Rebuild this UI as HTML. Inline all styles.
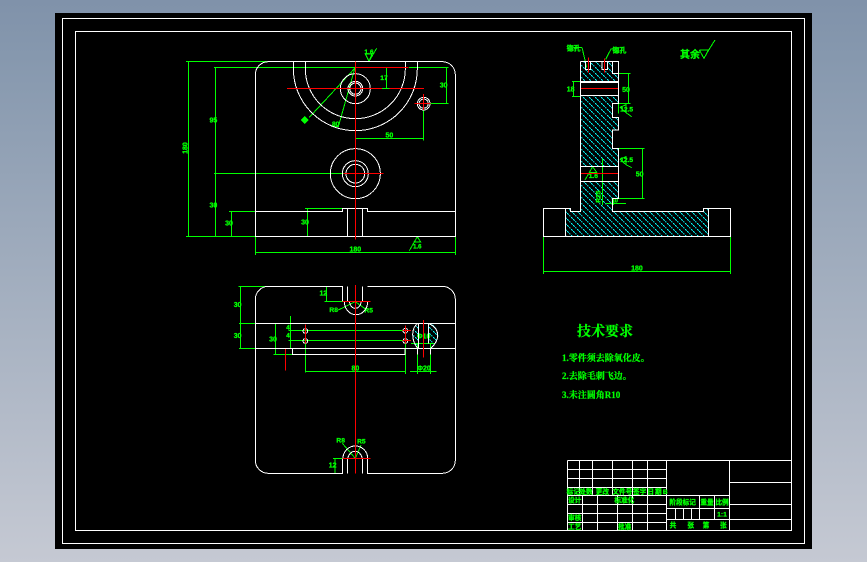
<!DOCTYPE html>
<html><head><meta charset="utf-8"><style>
html,body{margin:0;padding:0;width:867px;height:562px;overflow:hidden;background:linear-gradient(180deg,#8092aa 0,#8698ae 10%,#c5c9d3 100%)}
svg{position:absolute;left:0;top:0;shape-rendering:crispEdges}
.w{fill:none;stroke:#fff;stroke-width:1}
.w *,.g *,.r *{vector-effect:non-scaling-stroke}
.g{fill:none;stroke:#0f0;stroke-width:1}
.r{fill:none;stroke:#f00;stroke-width:1}
text{font-family:"Liberation Sans","Noto Sans CJK SC",sans-serif;font-weight:bold;fill:#0f0;stroke:#0f0;stroke-width:.9;text-anchor:middle}
.t{font-family:"Liberation Serif","Noto Serif CJK SC",serif;text-anchor:start;stroke-width:.25}
</style></head><body>
<svg width="867" height="562" viewBox="0 0 867 562" xmlns="http://www.w3.org/2000/svg">
<defs>
<pattern id="h" width="6" height="6" patternUnits="userSpaceOnUse"><path d="M-1 -1L7 7M-1 5L1 7M5 -1L7 1" stroke="#0ff" stroke-width="1" fill="none" stroke-dasharray="2 1" shape-rendering="crispEdges"/></pattern>
</defs>
<rect x="55" y="13" width="757" height="536" fill="#000"/>
<rect x="62.5" y="18.5" width="742" height="525" fill="none" stroke="#fff"/>
<rect x="75.5" y="31.5" width="716" height="499" fill="none" stroke="#fff"/>

<!-- Top view -->
<g transform="translate(170 30) scale(.33333)">
<g class="g">
<path d="M48 95H295M55 95V619M48 619H256M132 113H555M717 113H835M136 113V619M132 430H640M177 544H256M184 544V619M405 535H520M412 535V619M405 619H532M830 113V220M735 220H835M640 113H658M650 113V176M636 176H658M556 325H760M760 220V332M256 619V675M856 619V675M256 667H856M556 113L418 262M555 113L505 290M485 290H505"/>
<path d="M718 662L742 620L752 636H730M586 72H606L597 94L586 72M597 94L620 55"/>
</g>
<path d="M392 270L404 258L416 270L404 282Z" fill="#0f0"/>
<text x="597" y="72" font-size="20">1.6</text>
<text x="556" y="665" font-size="21">180</text>
<text x="742" y="656" font-size="18">1.6</text>
<text x="658" y="322" font-size="21">50</text>
<text x="821" y="173" font-size="21">30</text>
<text x="642" y="150" font-size="20">17</text>
<text x="497" y="288" font-size="20">80</text>
<text x="130" y="278" font-size="21">95</text>
<text x="130" y="532" font-size="21">30</text>
<text x="177" y="587" font-size="21">30</text>
<text x="405" y="584" font-size="21">30</text>
<text x="47" y="360" font-size="21" transform="rotate(-90 47 354)">180</text>
<g class="w">
<path d="M295 95H817A39 39 0 0 1 856 134V619H256V134A39 39 0 0 1 295 95"/>
<path d="M256 544H517V535H592V544H856M532 535V619M578 535V619"/>
<path d="M370 95V116A186 186 0 0 0 742 116V95M406 95V116A150 150 0 0 0 706 116V95"/>
<circle cx="556" cy="176" r="45"/><circle cx="556" cy="176" r="22"/><circle cx="556" cy="176" r="17"/>
<circle cx="761" cy="221" r="19"/><circle cx="761" cy="221" r="14"/>
<circle cx="556" cy="431" r="75"/><circle cx="556" cy="431" r="39"/><circle cx="556" cy="431" r="28"/>
</g>
<g class="r"><path d="M556 95V628M351 175H636M658 175H762M556 112H716M733 220H782M761 192V240M520 430H640"/></g>
</g>

<!-- Side view -->
<g fill="url(#h)">
<path d="M580.3 61.3H612.3V73.3H618.7V81.7H580.3Z"/>
<path d="M580.3 95.7H618.7V103.3H612.3V117.3H618.7V130H612.3V148.3H618.7V166.3H580.3Z"/>
<path d="M580.3 181.3H618.7V198.3H612.3V211.3H703.3V208.3H708.7V236.3H565.3V208.3H570.7V211.3H580.3Z"/>
</g>
<g transform="translate(530 30) scale(.33333)">
<rect x="167" y="94" width="15" height="24" fill="#000"/><rect x="216" y="94" width="16" height="24" fill="#000"/>
<g class="g">
<path d="M156 52L170 112M130 52H156M227 88L243 57H256M126 155H151M126 199H151M130 155V199M266 130H302M266 220H302M296 130V220M266 130V250M266 355H344M266 505H344M337 355V505M270 232L288 224V248L270 232M288 248L305 260M270 388L288 380V404L270 388M288 404L305 413M165 450L188 410L200 427H178M217 386V525M228 520H288M250 505V525M40 619V732M602 619V732M40 724H602M508 60H535L522 85L508 60M522 85L535 62L555 30"/>
</g>
<text x="131" y="62" font-size="21">锪孔</text>
<text x="268" y="68" font-size="21">锪孔</text>
<text x="122" y="185" font-size="21">18</text>
<text x="288" y="186" font-size="21">50</text>
<text x="290" y="244" font-size="20">12.5</text>
<text x="290" y="396" font-size="20">12.5</text>
<text x="329" y="440" font-size="21">50</text>
<text x="190" y="444" font-size="20">1.6</text>
<text x="204" y="507" font-size="20" transform="rotate(-90 204 500)">R25</text>
<text x="254" y="518" font-size="18">10</text>
<text x="321" y="722" font-size="21">180</text>
<text x="480" y="84" font-size="30">其余</text>
<g class="w">
<path d="M151 94H266V130H247V94M151 94V544H122V535H106V619M266 130V220H247V262H266V300H247V355H266V505H247V544H520V535H536V619H106M106 535H40V619H602V535H536"/>
<path d="M151 155H266M151 158H266M151 197H266M151 409H266M151 454H266M167 94V118H182V94M216 94V118H232V94"/>
</g>
<g class="r"><path d="M175 82V128M223 85V128M153 175H264M153 430H264"/></g>
</g>

<!-- Bottom view -->
<g fill="url(#h)">
<path d="M418 324C411 331 411 341 418 348Z"/>
<path d="M428.7 324H432C441 331 441 342 431 348H430Z"/>
</g>
<g transform="translate(225 280) scale(.33333)">
<g class="g">
<path d="M40 19H128M46 19V205M42 205H91M42 130H455M145 223H203M151 130V223M196 108V205M190 151H540M190 181H540M241 190V277M541 190V282M241 274H541M577 190V282M617 190V282M555 274H635M558 190H632M298 19H352M298 65H352M304 19V65M324 535H352M324 580H352M330 535V580M391 65L340 90M391 65L428 92M391 535L352 490M391 535L408 495"/>
</g>
<text x="38" y="81" font-size="21">30</text>
<text x="38" y="174" font-size="21">30</text>
<text x="144" y="185" font-size="21">30</text>
<text x="189" y="148" font-size="19">4</text>
<text x="189" y="172" font-size="19">4</text>
<text x="295" y="46" font-size="21">12</text>
<text x="326" y="96" font-size="20">R8</text>
<text x="431" y="97" font-size="20">R5</text>
<text x="391" y="271" font-size="21">80</text>
<text x="597" y="272" font-size="21">Φ20</text>
<text x="596" y="176" font-size="21">Φ10</text>
<text x="347" y="488" font-size="20">R8</text>
<text x="409" y="491" font-size="20">R5</text>
<text x="323" y="563" font-size="21">12</text>
<g class="w">
<path d="M130 19H352V65M368 19V65M412 19V65M428 19H652A39 39 0 0 1 691 58V541A39 39 0 0 1 652 580H428V535M412 535V580M368 580V535M352 535V580H130A39 39 0 0 1 91 541V58A39 39 0 0 1 130 19"/>
<path d="M358 65A33 37 0 0 0 428 65M374 65A17 20 0 0 0 408 65M354 535A37 37 0 0 1 428 535M368 535A23 30 0 0 1 412 535"/>
<path d="M91 130H691M91 205H691M203 205V223H540V205M578 131C558 145 558 180 578 205V223M617 223V205C646 180 646 145 611 131M581 131V205M611 131V190"/>
<circle cx="241" cy="153" r="7"/><circle cx="241" cy="183" r="7"/><circle cx="541" cy="152" r="7"/><circle cx="541" cy="183" r="7"/>
</g>
<g class="r"><path d="M391 15V580M352 65H437M352 535H437M241 133V190M541 136V190M181 207V272M595 120V233M533 152H558M533 182H558"/></g>
</g>

<!-- Title block -->
<g transform="translate(560 455) scale(.33333)">
<g class="w">
<path d="M22 16H693M22 43H319M22 70H319M22 97H319M22 121H508M22 148H319M22 175H319M22 202H319M319 160H508M319 193H508M508 82H693M508 148H693M508 193H693M22 16V226M319 16V226M508 16V226M58 16V121M97 16V121M157 16V121M217 16V121M262 16V121M67 121V226M112 121V226M172 121V226M217 121V226M262 121V226M418 121V193M463 121V193M346 160V193M370 160V193M394 160V193"/>
</g>
<g font-size="20">
<text x="40" y="117">标记</text><text x="78" y="117">处数</text><text x="127" y="117">更改</text><text x="187" y="117">文件号</text><text x="239" y="117">签字</text><text x="272" y="117">日</text><text x="295" y="117">期</text><text x="316" y="117">B</text>
<text x="44" y="143">设计</text><text x="193" y="143">标准化</text><text x="44" y="195">审核</text><text x="44" y="222">工艺</text><text x="194" y="222">批准</text>
<text x="368" y="148">阶段标记</text><text x="441" y="148">重量</text><text x="486" y="148">比例</text><text x="486" y="185">1:1</text>
<text x="339" y="218">共</text><text x="392" y="218">张</text><text x="438" y="218">第</text><text x="490" y="218">张</text>
</g>
</g>

<!-- Technical requirements -->
<text class="t" x="577" y="336" font-size="14">技术要求</text>
<text class="t" x="562" y="361" font-size="9">1.零件须去除氧化皮。</text>
<text class="t" x="562" y="379" font-size="9">2.去除毛刺飞边。</text>
<text class="t" x="562" y="398" font-size="9">3.未注圆角R10</text>
</svg>
</body></html>
